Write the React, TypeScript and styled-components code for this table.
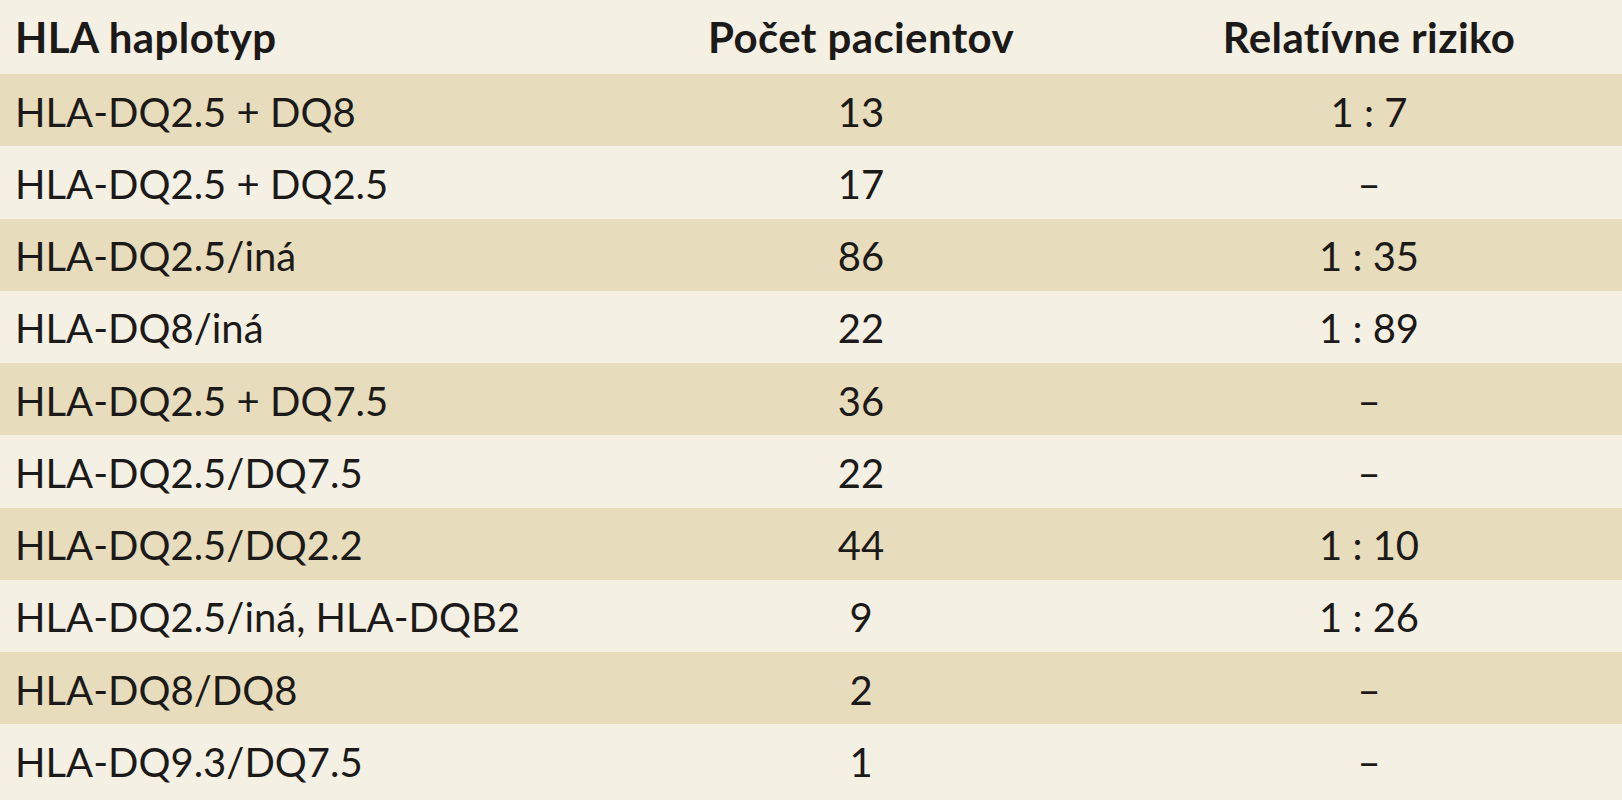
import React from "react";
import styled, { createGlobalStyle } from "styled-components";

const GlobalStyle = createGlobalStyle`
  html, body {
    margin: 0;
    padding: 0;
    background: #f5f0e4;
  }
  body {
    font-family: Lato, "Open Sans", "Noto Sans", sans-serif;
    color: #1b1a18;
  }
`;

const Table = styled.table`
  width: 1622px;
  border-collapse: collapse;
  table-layout: fixed;
`;

const Col = styled.col<{ $width?: number }>`
  width: ${(p) => (p.$width ? `${p.$width}px` : "auto")};
`;

const HeadRow = styled.tr`
  height: 74px;
  background: #f5f0e4;
`;

const HeadCell = styled.th<{ $align?: "left" | "center" }>`
  padding: ${(p) => (p.$align === "center" ? "0" : "0 0 0 15px")};
  text-align: ${(p) => p.$align || "left"};
  font-size: 42px;
  font-weight: 700;
  letter-spacing: 0.4px;
  white-space: nowrap;
`;

const Row = styled.tr<{ $shaded: boolean }>`
  height: 72.25px;
  background: ${(p) => (p.$shaded ? "#e7dcbc" : "#f5f0e4")};
`;

const Cell = styled.td<{ $align?: "left" | "center" }>`
  padding: ${(p) => (p.$align === "center" ? "3px 0 0" : "3px 0 0 15px")};
  text-align: ${(p) => p.$align || "left"};
  font-size: 40px;
  font-weight: 400;
  white-space: nowrap;
`;

const rows: [string, string, string][] = [
  ["HLA-DQ2.5 + DQ8", "13", "1 : 7"],
  ["HLA-DQ2.5 + DQ2.5", "17", "–"],
  ["HLA-DQ2.5/iná", "86", "1 : 35"],
  ["HLA-DQ8/iná", "22", "1 : 89"],
  ["HLA-DQ2.5 + DQ7.5", "36", "–"],
  ["HLA-DQ2.5/DQ7.5", "22", "–"],
  ["HLA-DQ2.5/DQ2.2", "44", "1 : 10"],
  ["HLA-DQ2.5/iná, HLA-DQB2", "9", "1 : 26"],
  ["HLA-DQ8/DQ8", "2", "–"],
  ["HLA-DQ9.3/DQ7.5", "1", "–"],
];

const App: React.FC = () => {
  return (
    <>
      <GlobalStyle />
      <Table>
        <colgroup>
          <Col $width={606} />
          <Col $width={510} />
          <Col />
        </colgroup>
        <thead>
          <HeadRow>
            <HeadCell>HLA haplotyp</HeadCell>
            <HeadCell $align="center">Počet pacientov</HeadCell>
            <HeadCell $align="center">Relatívne riziko</HeadCell>
          </HeadRow>
        </thead>
        <tbody>
          {rows.map((r, i) => (
            <Row key={i} $shaded={i % 2 === 0}>
              <Cell>{r[0]}</Cell>
              <Cell $align="center">{r[1]}</Cell>
              <Cell $align="center">{r[2]}</Cell>
            </Row>
          ))}
        </tbody>
      </Table>
    </>
  );
};

export default App;
